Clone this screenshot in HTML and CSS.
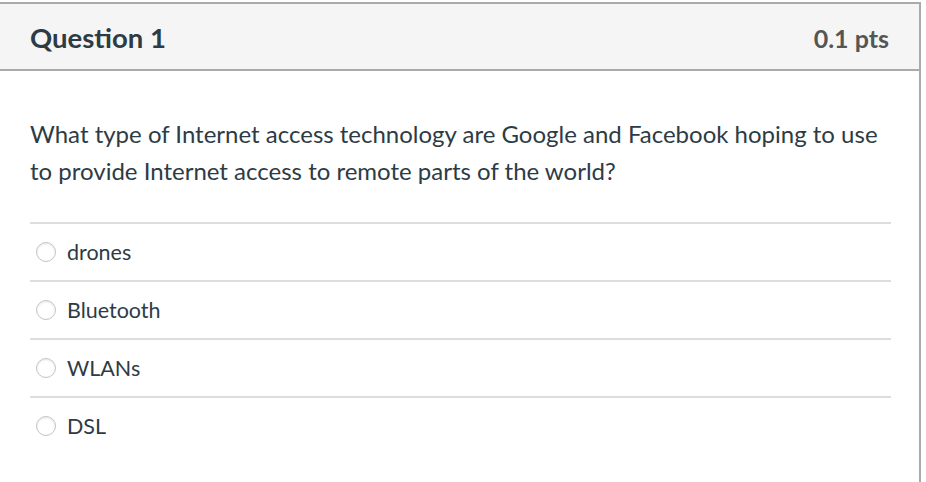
FILE: index.html
```html
<!DOCTYPE html>
<html>
<head>
<meta charset="utf-8">
<link rel="stylesheet" href="styles.css">
</head>
<body>
<div class="card">
  <div class="header">
    <div class="title">Question 1</div>
    <div class="pts">0.1 pts</div>
  </div>
  <div class="content">
    <div class="question">What type of Internet access technology are Google and Facebook hoping to use to provide Internet access to remote parts of the world?</div>
    <div class="answers">
      <label class="answer"><span class="radio"></span><span class="label">drones</span></label>
      <label class="answer"><span class="radio"></span><span class="label">Bluetooth</span></label>
      <label class="answer"><span class="radio"></span><span class="label">WLANs</span></label>
      <label class="answer"><span class="radio"></span><span class="label">DSL</span></label>
    </div>
  </div>
</div>
</body>
</html>
```
FILE: styles.css
```css
html, body {
  margin: 0;
  padding: 0;
  background: #fff;
}
body {
  font-family: Lato, "Open Sans", sans-serif;
  color: #2d3b45;
}
.card {
  margin-top: 2px;
  width: 921px;
  height: 480px;
  border-top: 2px solid #aaaaaa;
  border-right: 2px solid #aaaaaa;
  box-sizing: border-box;
}
.header {
  height: 67px;
  background: #f5f5f5;
  border-bottom: 2px solid #aaaaaa;
  box-sizing: border-box;
  display: flex;
  align-items: center;
  justify-content: space-between;
  padding: 2px 30px 0 30px;
}
.title {
  font-size: 27.5px;
  font-weight: 700;
  color: #2d3b45;
}
.pts {
  font-size: 25px;
  font-weight: 700;
  color: #555555;
}
.content {
  padding: 44px 30px 0 30px;
}
.question {
  font-size: 24px;
  line-height: 37px;
  color: #2d3b45;
  margin-bottom: 33px;
  width: 861px;
}
.answers {
  width: 861px;
}
.answer {
  display: flex;
  align-items: center;
  height: 56px;
  border-top: 2px solid #dddddd;
  padding-left: 6px;
}
.radio {
  width: 18px;
  height: 18px;
  border: 1px solid #c4c4c4;
  border-radius: 50%;
  box-shadow: inset 0 1px 2px rgba(0,0,0,0.1);
  margin-right: 11px;
  flex: none;
}
.label {
  font-size: 21.5px;
  color: #2d3b45;
}
```
